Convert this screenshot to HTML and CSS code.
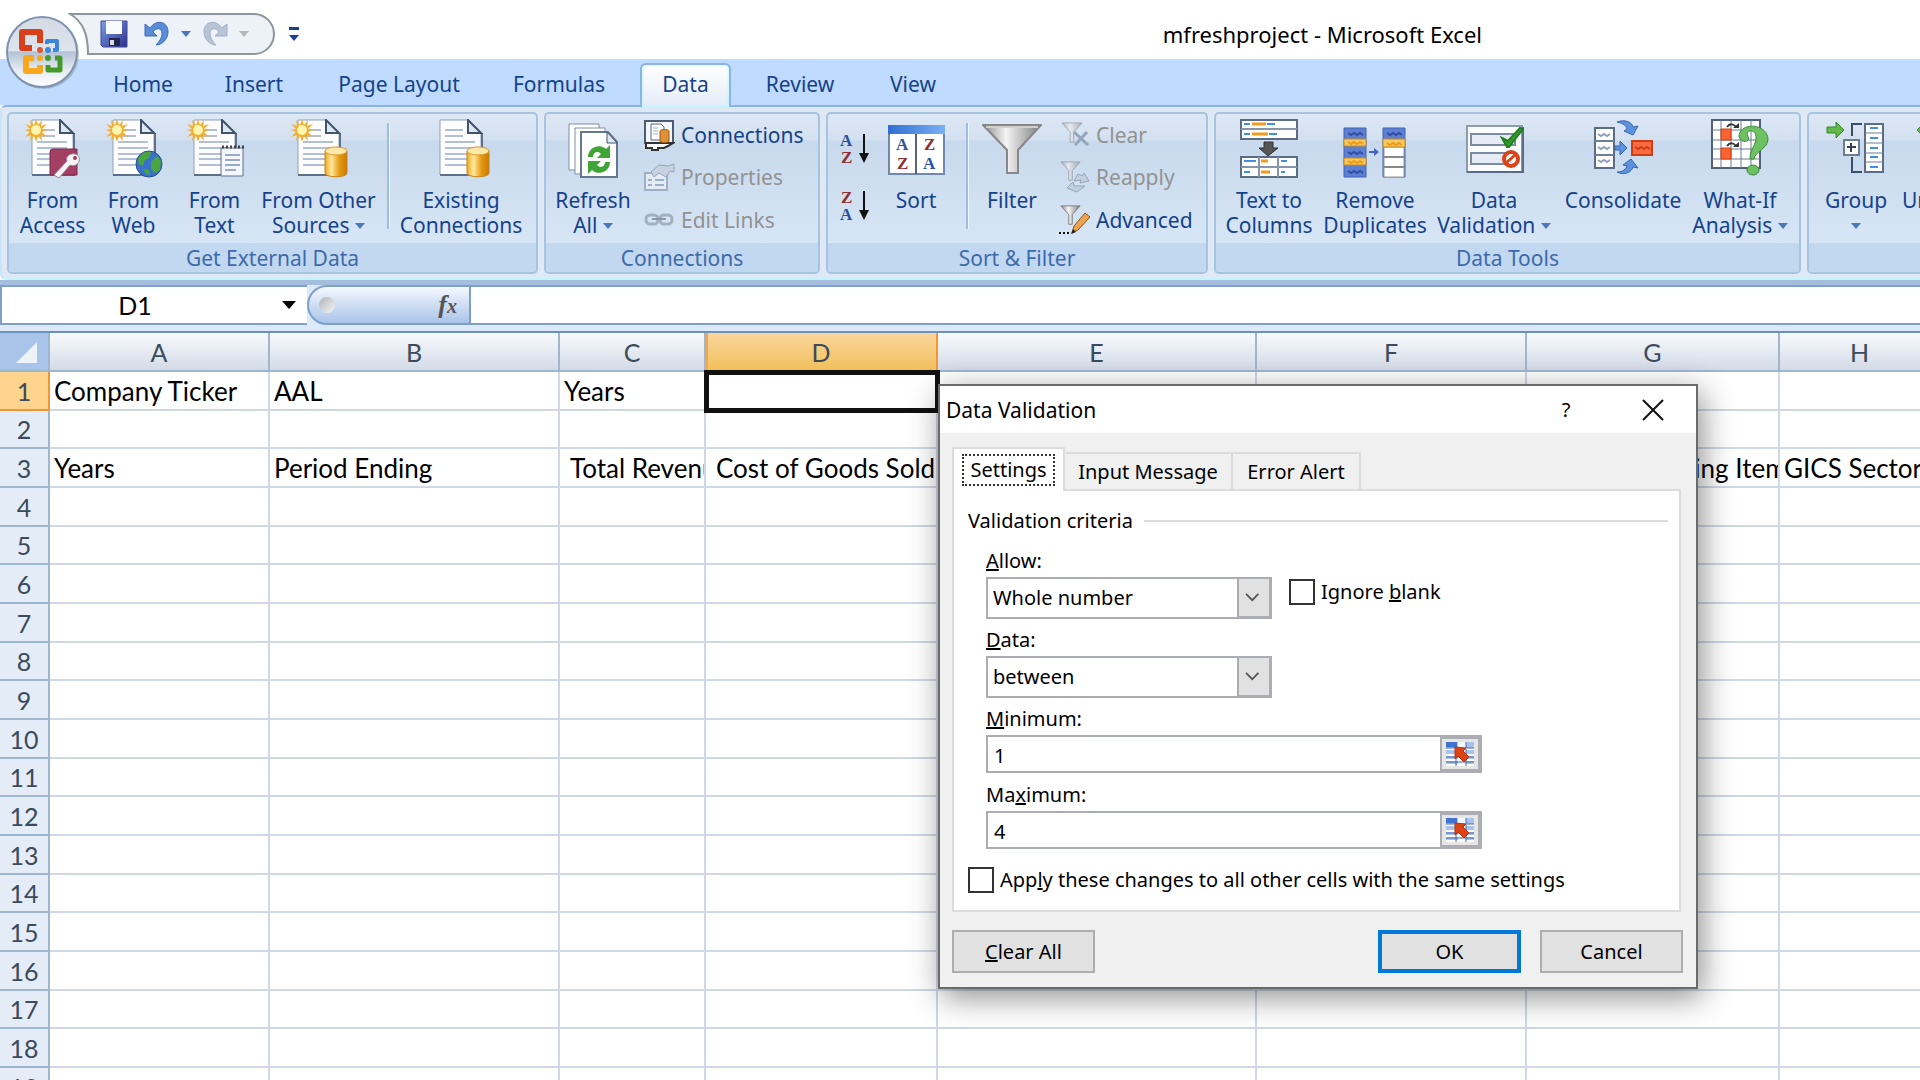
FILE: index.html
```html
<!DOCTYPE html>
<html lang="en">
<head>
<meta charset="utf-8">
<title>mfreshproject - Microsoft Excel</title>
<link rel="stylesheet" href="styles.css">
</head>
<body>
<svg class="defs" aria-hidden="true">
  <defs>
    <linearGradient id="gold" x1="0" x2="1"><stop offset="0" stop-color="#f0a81e"/><stop offset=".3" stop-color="#ffe9a0"/><stop offset=".65" stop-color="#e59a12"/><stop offset="1" stop-color="#c87a05"/></linearGradient>
    <linearGradient id="steel" x1="0" x2="1"><stop offset="0" stop-color="#8d8d8d"/><stop offset=".4" stop-color="#f4f4f4"/><stop offset="1" stop-color="#7c7c7c"/></linearGradient>
    <linearGradient id="floppy" x1="0" x2="1" y2="1"><stop offset="0" stop-color="#7f9ee8"/><stop offset="1" stop-color="#2b3189"/></linearGradient>
    <linearGradient id="orb" x2="0" y2="1"><stop offset="0" stop-color="#d3dae4"/><stop offset=".48" stop-color="#dde4ec"/><stop offset=".5" stop-color="#b3c2d4"/><stop offset=".75" stop-color="#e4eaf1"/><stop offset="1" stop-color="#fff"/></linearGradient>
    <linearGradient id="bluebar" x2="1"><stop offset="0" stop-color="#2f6fd0"/><stop offset="1" stop-color="#79b0f5"/></linearGradient>
    <symbol id="page" viewBox="0 0 60 60">
      <path d="M9 1h29l12 13v42H9z" fill="#fdfdff" stroke="#8fa1b8"/>
      <path d="M9 56h42V14" fill="none" stroke="#5d7089" stroke-width="2"/>
      <path d="M37 1v13h13z" fill="#dfe7f2" stroke="#41546e" stroke-width="2"/>
      <path d="M14 11h18M14 17h18M14 23h30M14 29h30M14 35h30M14 40h30M14 46h30" stroke="#b3bfd2" stroke-width="2"/>
    </symbol>
    <symbol id="spark" viewBox="0 0 22 22">
      <path d="M11 0l2 6 4-5-1 6 6-2-5 5 5 1-5 2 5 5-6-2 1 6-4-5-2 6-2-6-4 5 1-6-6 2 5-5-5-2 5-1-5-5 6 2-1-6 4 5z" fill="#f4ad2c"/>
      <circle cx="11" cy="11" r="5" fill="#fff6b0"/>
    </symbol>
    <symbol id="cylinder" viewBox="0 0 24 32">
      <path d="M1 5v22c0 5 22 5 22 0V5z" fill="url(#gold)" stroke="#c98414"/>
      <ellipse cx="12" cy="5" rx="11" ry="4" fill="#ffe9a8" stroke="#d89a2a"/>
    </symbol>
    <symbol id="funnel" viewBox="0 0 24 24">
      <path d="M1 1h22l-9 10v11h-4V11z" fill="url(#steel)" stroke="#777"/>
    </symbol>
    <symbol id="rangepick" viewBox="0 0 30 26">
      <path d="M1 1h28v24H1z" fill="#a9c2ee"/>
      <path d="M13 1h8v24h-8z" fill="#f3f7ff"/>
      <path d="M1 1h11v5H1z" fill="#3f73d2"/>
      <path d="M1 8h28M1 14h28M1 19h28M1 24h28" stroke="#fff" stroke-width="2"/>
      <path d="M1 7h9M1 16h28M1 21h28M22 7h7M11 6v19M21 1v24" stroke="#466ba6"/>
      <path d="M10 6l11 1-3 3 6 6-5 5-6-6-3 3z" fill="#dd4415" stroke="#b5340c"/>
    </symbol>
  </defs>
</svg>

<header class="titlebar">
  <button class="office" aria-label="Office Button">
    <svg viewBox="0 0 76 76" width="76" height="76">
      <circle cx="39" cy="39" r="35" fill="#8a93a0" opacity=".5"/>
      <circle cx="37" cy="37" r="35" fill="url(#orb)" stroke="#7d92b0" stroke-width="2"/>
      <g fill="none" stroke-linejoin="round">
        <path d="M27 33H17V17h18v11" stroke="#d8401b" stroke-width="6"/>
        <path d="M42 29v-3h10v9h-4" stroke="#3b86dc" stroke-width="4"/>
        <path d="M29 43h-8v13h14v-6" stroke="#f7a81c" stroke-width="6"/>
        <path d="M43 50v5h12V43h-5" stroke="#45992c" stroke-width="5"/>
      </g>
      <circle cx="35" cy="35" r="3" fill="#e5532d"/><circle cx="43" cy="35" r="3" fill="#3b86dc"/><circle cx="35" cy="43" r="3" fill="#f7a81c"/><circle cx="43" cy="43" r="3" fill="#45992c"/>
    </svg>
  </button>
  <nav class="qat" aria-label="Quick Access Toolbar">
    <svg class="qat-shape" viewBox="0 0 208 44" width="208" height="44" aria-hidden="true">
      <path d="M2 2H186a20 20 0 0 1 0 40H20C20 24 16 10 2 2z" fill="#edf1f8" stroke="#8f959d" stroke-width="2"/>
    </svg>
    <button aria-label="Save"><svg viewBox="0 0 28 28" width="28" height="28"><path d="M1 1h26v26H3l-2-2z" fill="url(#floppy)" stroke="#3c4a9e"/><path d="M6 1h16v13H6z" fill="#f8fbff"/><path d="M9 18h11v8H9z" fill="#23264e"/><path d="M10 20h4v5h-4z" fill="#ddd"/></svg></button>
    <button aria-label="Undo"><svg viewBox="0 0 26 26" width="26" height="26"><path d="M1 3v12h12l-4-4c3-5 9-4 9 1s-3 9-6 12c6 0 12-6 12-13C24 0 12-2 6 7z" fill="#5b8cd8" stroke="#3c6cbb"/></svg></button>
    <button class="drop" aria-label="Undo list"><i class="tri"></i></button>
    <button aria-label="Redo"><svg viewBox="0 0 26 26" width="26" height="26"><path d="M25 3v12H13l4-4c-3-5-9-4-9 1s3 9 6 12C8 24 2 18 2 11 2 0 14-2 20 7z" fill="#b9c5d6" stroke="#9fafc4"/></svg></button>
    <button class="drop" aria-label="Redo list"><i class="tri pale"></i></button>
    <button class="more" aria-label="Customize"><i class="tri dark"></i></button>
  </nav>
  <h1>mfreshproject - Microsoft Excel</h1>
</header>

<nav class="tabs">
  <a href="#" class="t-home">Home</a><a href="#" class="t-insert">Insert</a><a href="#" class="t-layout">Page Layout</a><a href="#" class="t-formulas">Formulas</a><a href="#" class="t-data active">Data</a><a href="#" class="t-review">Review</a><a href="#" class="t-view">View</a>
</nav>

<div class="ribbon">
  <section class="group g-external">
    <div class="tools">
      <button class="big w81"><svg viewBox="0 0 60 60"><use href="#page" width="60" height="60"/><use href="#spark" x="2" width="22" height="22"/><path d="M27 33q0-3 3-3h24v26H27z" fill="#a33f63" stroke="#812a4c"/><path d="M31 56l13-14c-2-5 4-8 8-7 5 1 6 7 2 10-2 2-5 2-7 1L36 59z" fill="#f7f4f6" stroke="#998b95"/><circle cx="52" cy="39" r="2" fill="#a33f63"/></svg><span>From<br>Access</span></button>
      <button class="big w81"><svg viewBox="0 0 60 60"><use href="#page" width="60" height="60"/><use href="#spark" x="2" width="22" height="22"/><circle cx="45" cy="45" r="13" fill="#3a72cb" stroke="#274d93"/><path d="M34 40c4-7 9-8 13-7l-2 6-5 3-1 5-4-2zM47 43l6-6 4 5-1 9-5 3-4-4zM39 50l6 1 1 5-5-2z" fill="#49a63c"/></svg><span>From<br>Web</span></button>
      <button class="big w81"><svg viewBox="0 0 60 60"><use href="#page" width="60" height="60"/><use href="#spark" x="2" width="22" height="22"/><path d="M36 29h22v28H36z" fill="#f4f8fe" stroke="#5d7089"/><path d="M37 28h22" stroke="#444" stroke-width="3" stroke-dasharray="2 2"/><path d="M40 36h15M40 41h15M40 46h15M40 51h11" stroke="#9dabc1" stroke-width="2"/></svg><span>From<br>Text</span></button>
      <button class="big w127"><svg viewBox="0 0 60 60"><use href="#page" width="60" height="60"/><use href="#spark" x="2" width="22" height="22"/><use href="#cylinder" x="35" y="27" width="24" height="32"/></svg><span>From Other<br>Sources <i class="tri"></i></span></button>
      <span class="sep"></span>
      <button class="big w136"><svg viewBox="0 0 60 60"><use href="#page" width="60" height="60"/><use href="#cylinder" x="35" y="27" width="24" height="32"/></svg><span>Existing<br>Connections</span></button>
    </div>
    <h2>Get External Data</h2>
  </section>

  <section class="group g-conn">
    <div class="tools">
      <button class="big w88"><svg viewBox="0 0 60 60"><g fill="#fff" stroke="#7f8fa6"><path d="M6 5h30v46H6z"/><path d="M12 9h30v46H12z"/></g><path d="M18 13h27l9 10v35H18z" fill="#fff" stroke="#65778f" stroke-width="2"/><path d="M44 13v11h10z" fill="#dfe7f2" stroke="#41546e"/><g fill="#3fa535"><path d="M25 38c0-10 12-14 18-8l4-4v13H34l4-4c-4-4-8-1-8 3z"/><path d="M47 43c0 10-12 14-18 8l-4 4V42h13l-4 4c4 4 8 1 8-3z"/></g></svg><span>Refresh<br>All <i class="tri"></i></span></button>
      <div class="stack">
        <button class="small"><svg viewBox="0 0 32 32"><path d="M2 2h28v22H2z" fill="#f3f6fb" stroke="#4b5b72" stroke-width="2"/><path d="M3 24v5h6v2h6v-2h6l4-2 5-3z" fill="#fff" stroke="#333" stroke-width="2"/><path d="M4 4h24v18H4z" fill="#f3f6fb"/><path d="M8 5h10l3 3v13H8z" fill="#fff" stroke="#56698a"/><path d="M10 9h5M10 12h5M10 15h5" stroke="#9aabc4"/><path d="M17 12v10c0 2 9 2 9 0V12c0-2-9-2-9 0z" fill="#e09034" stroke="#a55d17"/></svg>Connections</button>
        <button class="small" disabled><svg viewBox="0 0 32 32"><path d="M2 12h22v17H2z" fill="#e4ebf4" stroke="#9fb0c6" stroke-width="2"/><path d="M5 19h4M5 24h4M12 19h9M12 24h9" stroke="#9fb0c6" stroke-width="2"/><path d="M8 11l8-7 9 1 6-2v8l-4-1-4 6-7-4-5 4z" fill="#c6d2e1" stroke="#94a5bc"/></svg>Properties</button>
        <button class="small" disabled><svg viewBox="0 0 32 32"><g fill="none" stroke="#a3b0c0" stroke-width="3"><rect x="3" y="11" width="12" height="9" rx="4"/><rect x="17" y="11" width="12" height="9" rx="4"/><path d="M9 15h14" stroke="#8c99aa" stroke-width="2"/></g></svg>Edit Links</button>
      </div>
    </div>
    <h2>Connections</h2>
  </section>

  <section class="group g-sort">
    <div class="tools">
      <div class="az">
        <button aria-label="Sort A to Z"><svg viewBox="0 0 32 32" width="32" height="32"><text x="1" y="13" class="ic a">A</text><text x="2" y="30" class="ic z">Z</text><path d="M25 1v22" stroke="#111" stroke-width="2"/><path d="M20 20h10l-5 10z" fill="#111"/></svg></button>
        <button aria-label="Sort Z to A"><svg viewBox="0 0 32 32" width="32" height="32"><text x="2" y="13" class="ic z">Z</text><text x="1" y="30" class="ic a">A</text><path d="M25 1v22" stroke="#111" stroke-width="2"/><path d="M20 20h10l-5 10z" fill="#111"/></svg></button>
      </div>
      <button class="big w90"><svg viewBox="0 0 60 60"><path d="M3 7h55v48H3z" fill="#fff" stroke="#6f88ab" stroke-width="2"/><path d="M2 6h57v9H2z" fill="url(#bluebar)"/><path d="M30 15v40" stroke="#54657c" stroke-width="2"/><text x="10" y="31" class="ic a">A</text><text x="11" y="50" class="ic z">Z</text><text x="38" y="31" class="ic z">Z</text><text x="37" y="50" class="ic a">A</text></svg><span>Sort</span></button>
      <span class="sep"></span>
      <button class="big w80"><svg viewBox="0 0 60 60"><path d="M1 6h58L36 31v23H25V31z" fill="url(#steel)" stroke="#888" stroke-width="2"/><path d="M4 8h52" stroke="#cfcfcf" stroke-width="2"/></svg><span>Filter</span></button>
      <div class="stack">
        <button class="small" disabled><svg viewBox="0 0 32 32"><use href="#funnel" x="3" y="3" width="22" height="22" opacity=".55"/><path d="M16 13l14 13M29 13L17 26" stroke="#94a5bc" stroke-width="3"/></svg>Clear</button>
        <button class="small" disabled><svg viewBox="0 0 32 32"><use href="#funnel" x="2" width="21" height="21" opacity=".55"/><path d="M16 20l4-7 4 2 2-3 5 8-9 2 1-3zM27 25l-8 6-10-4 6-6 1 4z" fill="#c3cfde" stroke="#94a5bc"/></svg>Reapply</button>
        <button class="small"><svg viewBox="0 0 32 32"><use href="#funnel" x="2" y="1" width="21" height="21"/><path d="M1 29h11" stroke="#111" stroke-width="2" stroke-dasharray="2 2"/><path d="M14 29l2-7L27 9l5 4-12 13z" fill="#f0a24d" stroke="#8a5522"/><path d="M13 30l2-5 3 3z" fill="#222"/></svg>Advanced</button>
      </div>
    </div>
    <h2>Sort &amp; Filter</h2>
  </section>

  <section class="group g-tools">
    <div class="tools">
      <button class="big w100"><svg viewBox="0 0 60 60"><path d="M2 1h56v19H2zM2 38h56v20H2z" fill="#fff" stroke="#5b6d84" stroke-width="2"/><path d="M2 10h56M2 48h56M20 38v20M39 38v20" stroke="#8695ab" stroke-width="2"/><path d="M5 5h6M28 5h8M5 15h6M30 15h8M5 42h12M42 42h6M5 53h6M42 53h4" stroke="#3f8fe6" stroke-width="2"/><path d="M13 5h14M13 15h16M22 42h7M22 53h9" stroke="#f39b1d" stroke-width="3"/><path d="M25 23h9v6h5L29 37l-9-8h5z" fill="#555" stroke="#333"/></svg><span>Text to<br>Columns</span></button>
      <button class="big w112"><svg viewBox="0 0 64 60" class="wide"><path d="M1 9h22v49H1zM40 9h22v49H40z" fill="#5d7fd0" stroke="#4263b8"/><path d="M41 28h20v30H41z" fill="#fff" stroke="#999"/><path d="M41 38h20M41 48h20" stroke="#888" stroke-width="2"/><path d="M1 20h22v7H1zM1 39h22v7H1zM40 20h22v8H40z" fill="#f8c860" stroke="#c78a1d"/><path d="M5 14l3 2 3-2 3 2 3-2 3 2M5 33l3 2 3-2 3 2 3-2 3 2M5 52l3 2 3-2 3 2 3-2 3 2M44 14l3 2 3-2 3 2 3-2 3 2" fill="none" stroke="#2f4fa5" stroke-width="2"/><path d="M5 23l3 2 3-2 3 2 3-2 3 2M5 42l3 2 3-2 3 2 3-2 3 2M44 24l3 2 3-2 3 2 3-2 3 2" fill="none" stroke="#ef9a12" stroke-width="2"/><path d="M26 33h8" stroke="#4263c0" stroke-width="2"/><path d="M31 29l5 4-5 4z" fill="#4263c0"/></svg><span>Remove<br>Duplicates</span></button>
      <button class="big w126"><svg viewBox="0 0 60 60"><path d="M3 7h55v46H3z" fill="#fbfcff" stroke="#8b9bb1" stroke-width="2"/><path d="M3 53h56V8" fill="none" stroke="#5b6d84" stroke-width="2"/><path d="M7 15h44v11H7zM7 34h44v11H7z" fill="#e6ecf5" stroke="#7b8ba2" stroke-width="2"/><path d="M38 19l6 3L56 9l3 1-14 18h-2z" fill="#2f9e2b" stroke="#23801f" stroke-width="2"/><circle cx="47" cy="40" r="7" fill="#fff" stroke="#db4416" stroke-width="4"/><path d="M42 44l9-8" stroke="#db4416" stroke-width="3"/></svg><span>Data<br>Validation <i class="tri"></i></span></button>
      <button class="big w132"><svg viewBox="0 0 60 60"><path d="M2 9h19v40H2z" fill="#fff" stroke="#5b6d84" stroke-width="2"/><path d="M2 22h19M2 36h19" stroke="#6c7d94" stroke-width="2"/><path d="M5 15l3 2 3-2 3 2 3-2M5 28l3 2 3-2 3 2 3-2M5 41l3 2 3-2 3 2 3-2" fill="none" stroke="#8fa0b8" stroke-width="2"/><g fill="#5f92dc" stroke="#3566b4"><path d="M24 3c8-3 15 0 16 5l5-1-5 9-9-4 3-2c-1-4-5-6-10-7z"/><path d="M22 27h5v-5l7 7-7 7v-5h-5z"/><path d="M24 53c6 0 9-3 10-6l-4-1 8-6 7 9-5-1c-1 5-9 9-16 5z"/></g><path d="M39 22h20v14H39z" fill="#fa6a40" stroke="#cc3e12" stroke-width="2"/><path d="M42 28l3 2 3-2 3 2 3-2 3 2" fill="none" stroke="#cc3e12" stroke-width="2"/></svg><span>Consolidate</span></button>
      <button class="big w102"><svg viewBox="0 0 60 60"><path d="M2 1h48v48H2z" fill="#fff" stroke="#4f6078" stroke-width="2"/><path d="M11 1v48M21 1v48M31 1v48M41 1v48M2 11h48M2 21h48M2 30h48M2 40h48" stroke="#6d7d94"/><path d="M11 10h10v11H11zM11 29h10v11H11z" fill="#fb6330" stroke="#cc3e12"/><path d="M17 8c3-4 7-3 9 0M17 27c3-4 7-3 9 0" fill="none" stroke="#333" stroke-width="2"/><path d="M23 9h6V4zM23 28h6v-5z" fill="#333"/><path d="M29 17C30 3 57 4 58 20c0 10-13 12-14 20h-4c0-11 7-14 6-23-1-6-8-7-9-2l2 5c-2 4-9 3-10-3z" fill="#6dc163" stroke="#3a8b35" stroke-width="1"/><ellipse cx="43" cy="51" rx="6" ry="5" fill="#6dc163" stroke="#3a8b35"/></svg><span>What-If<br>Analysis <i class="tri"></i></span></button>
    </div>
    <h2>Data Tools</h2>
  </section>

  <section class="group g-outline">
    <div class="tools">
      <button class="big w88"><svg viewBox="0 0 60 60"><path d="M1 8h9V3l8 8-8 8v-5H1z" fill="#62b94b" stroke="#34872a"/><path d="M36 5H26v12M26 38v15h10" fill="none" stroke="#3c4d66" stroke-width="2"/><path d="M18 21h15v15H18z" fill="#fff" stroke="#6d7d94" stroke-width="2"/><path d="M21 28h9M25 24v9" stroke="#33425a" stroke-width="2"/><path d="M39 5h18v48H39z" fill="#fff" stroke="#5b6d84" stroke-width="2"/><path d="M39 14h18M39 24h18M39 34h18M39 43h18" stroke="#6d7d94"/><path d="M44 9h8M44 19h8M44 29h8M44 38h8M44 48h8" stroke="#3f8fe6" stroke-width="2"/></svg><span>Group<br><i class="tri"></i></span></button>
      <button class="big w92"><svg viewBox="0 0 60 60"><path d="M18 8H9V3l-8 8 8 8v-5h9z" fill="#62b94b" stroke="#34872a"/></svg><span>Ungroup<br><i class="tri"></i></span></button>
    </div>
    <h2></h2>
  </section>
</div>

<div class="formulabar">
  <div class="namebox"><input class="name" value="D1" aria-label="Name Box"><i class="tri black"></i></div>
  <div class="fxpill"><i class="dot"></i><button aria-label="Insert Function"><span class="f">f</span><span class="x">x</span></button></div>
  <input class="formula" aria-label="Formula Bar">
</div>

<main class="sheet">
  <table class="grid">
    <colgroup><col class="c0"><col class="cA"><col class="cB"><col class="cC"><col class="cD"><col class="cE"><col class="cF"><col class="cG"><col class="cH"></colgroup>
    <thead><tr><th class="corner"><svg viewBox="0 0 40 30" width="40" height="30" aria-hidden="true"><path d="M33 4v21H12z" fill="#eef3f8"/></svg></th><th>A</th><th>B</th><th>C</th><th class="sel">D</th><th>E</th><th>F</th><th>G</th><th>H</th></tr></thead>
    <tbody>
      <tr><th class="sel">1</th><td>Company Ticker</td><td>AAL</td><td>Years</td><td class="cursor"></td><td></td><td></td><td></td><td></td></tr>
      <tr><th>2</th><td></td><td></td><td></td><td></td><td></td><td></td><td></td><td></td></tr>
      <tr><th>3</th><td>Years</td><td>Period Ending</td><td class="ind">Total Revenue</td><td class="ind">Cost of Goods Sold</td><td></td><td></td><td class="ind2">Non-Recurring Items</td><td>GICS Sector</td></tr>
      <tr><th>4</th><td></td><td></td><td></td><td></td><td></td><td></td><td></td><td></td></tr>
      <tr><th>5</th><td></td><td></td><td></td><td></td><td></td><td></td><td></td><td></td></tr>
      <tr><th>6</th><td></td><td></td><td></td><td></td><td></td><td></td><td></td><td></td></tr>
      <tr><th>7</th><td></td><td></td><td></td><td></td><td></td><td></td><td></td><td></td></tr>
      <tr><th>8</th><td></td><td></td><td></td><td></td><td></td><td></td><td></td><td></td></tr>
      <tr><th>9</th><td></td><td></td><td></td><td></td><td></td><td></td><td></td><td></td></tr>
      <tr><th>10</th><td></td><td></td><td></td><td></td><td></td><td></td><td></td><td></td></tr>
      <tr><th>11</th><td></td><td></td><td></td><td></td><td></td><td></td><td></td><td></td></tr>
      <tr><th>12</th><td></td><td></td><td></td><td></td><td></td><td></td><td></td><td></td></tr>
      <tr><th>13</th><td></td><td></td><td></td><td></td><td></td><td></td><td></td><td></td></tr>
      <tr><th>14</th><td></td><td></td><td></td><td></td><td></td><td></td><td></td><td></td></tr>
      <tr><th>15</th><td></td><td></td><td></td><td></td><td></td><td></td><td></td><td></td></tr>
      <tr><th>16</th><td></td><td></td><td></td><td></td><td></td><td></td><td></td><td></td></tr>
      <tr><th>17</th><td></td><td></td><td></td><td></td><td></td><td></td><td></td><td></td></tr>
      <tr><th>18</th><td></td><td></td><td></td><td></td><td></td><td></td><td></td><td></td></tr>
      <tr><th>19</th><td></td><td></td><td></td><td></td><td></td><td></td><td></td><td></td></tr>
    </tbody>
  </table>
</main>

<form class="dialog" role="dialog" aria-labelledby="dlg-title">
  <div class="dlg-head">
    <h2 id="dlg-title">Data Validation</h2>
    <button type="button" class="help" aria-label="Help">?</button>
    <button type="button" class="close" aria-label="Close"><svg viewBox="0 0 22 22" width="22" height="22"><path d="M1 1l20 20M21 1L1 21" stroke="#111" stroke-width="2"/></svg></button>
  </div>
  <div class="dlg-tabs">
    <button type="button" class="on"><span>Settings</span></button><button type="button" class="t2">Input Message</button><button type="button" class="t3">Error Alert</button>
  </div>
  <div class="pane">
    <div class="legend">Validation criteria<span class="rule"></span></div>
    <div class="fields">
      <label for="allow"><u>A</u>llow:</label>
      <div class="line">
        <div class="combo"><select id="allow"><option>Whole number</option></select><svg viewBox="0 0 34 38" width="34" height="38" aria-hidden="true"><path d="M8 15l7 7 7-7" fill="none" stroke="#555" stroke-width="2"/></svg></div>
        <label class="check"><input type="checkbox">Ignore <u>b</u>lank</label>
      </div>
      <label for="data"><u>D</u>ata:</label>
      <div class="line">
        <div class="combo"><select id="data"><option>between</option></select><svg viewBox="0 0 34 38" width="34" height="38" aria-hidden="true"><path d="M8 15l7 7 7-7" fill="none" stroke="#555" stroke-width="2"/></svg></div>
      </div>
      <label for="min"><u>M</u>inimum:</label>
      <div class="ref"><input id="min" value="1"><button type="button" aria-label="Select minimum range"><svg width="30" height="26"><use href="#rangepick" width="30" height="26"/></svg></button></div>
      <label for="max">Ma<u>x</u>imum:</label>
      <div class="ref"><input id="max" value="4"><button type="button" aria-label="Select maximum range"><svg width="30" height="26"><use href="#rangepick" width="30" height="26"/></svg></button></div>
    </div>
    <label class="check all"><input type="checkbox">App<u>l</u>y these changes to all other cells with the same settings</label>
  </div>
  <div class="actions">
    <button type="button" class="clear"><u>C</u>lear All</button>
    <button type="button" class="ok">OK</button>
    <button type="button">Cancel</button>
  </div>
</form>
</body>
</html>
```
FILE: styles.css
```css
* { box-sizing: border-box; }
html, body { height: 100%; }
body {
  margin: 0;
  position: relative;
  display: flex;
  flex-direction: column;
  overflow: hidden;
  background: #fff;
  font-family: "Noto Sans", sans-serif;
  font-size: 21px;
  color: #000;
}
button, input, select { font: inherit; color: inherit; margin: 0; padding: 0; border: 0; background: none; border-radius: 0; }
h1, h2 { margin: 0; font-weight: 400; }
.defs { position: absolute; width: 0; height: 0; }

.tri { display: inline-block; width: 0; height: 0; border: 5px solid transparent; border-top: 6px solid #4a77b8; border-bottom: 0; vertical-align: middle; }
.tri.pale { border-top-color: #b5b5b5; }
.tri.dark { border-top-color: #1c3f94; }
.tri.black { border-width: 8px 7px 0; border-top-color: #000; }

/* title bar */
.titlebar { position: relative; flex: none; display: flex; align-items: center; height: 59px; padding-top: 8px; }
.office { position: absolute; left: 5px; top: 15px; height: 76px; z-index: 2; }
.qat { position: relative; display: flex; align-items: center; gap: 8px; height: 44px; margin-left: 68px; padding-left: 32px; }
.qat-shape { position: absolute; left: 0; top: 0; }
.qat button { position: relative; display: flex; align-items: center; }
.qat button:nth-of-type(2) { margin-left: 8px; }
.qat .drop { margin: 0 3px; }
.qat .more { margin-left: 29px; padding-top: 5px; border-top: 3px solid #1c3f94; }
.titlebar h1 { margin-left: auto; margin-right: 438px; font-size: 22px; line-height: 30px; }

/* tabs */
.tabs { flex: none; display: flex; height: 46px; padding: 4px 0 0 84px; background: #bfdbff; }
.tabs a { display: flex; align-items: center; justify-content: center; height: 42px; color: #15428b; text-decoration: none; }
.t-home { width: 118px; }
.t-insert { width: 104px; }
.t-layout { width: 186px; }
.t-formulas { width: 134px; margin-right: 14px; }
.t-data { width: 91px; }
.t-review { width: 138px; }
.t-view { width: 88px; }
.tabs .active { position: relative; z-index: 1; height: 44px; padding-bottom: 4px; border: 2px solid #8db2e3; border-bottom: 0; border-radius: 6px 6px 0 0; background: linear-gradient(#fff, #e3ecf8); box-shadow: inset 0 0 3px #9ff; }

/* ribbon */
.ribbon {
  flex: none; display: flex; gap: 6px; height: 175px; padding: 5px 0 4px 5px; overflow: hidden;
  border-top: 2px solid #8db2e3; border-bottom: 2px solid #c3f3fb; border-left: 2px solid #c9e4f8; border-radius: 6px 0 0 6px; background: #dfe9f5;
}
.group { flex: none; display: flex; flex-direction: column; border: 2px solid #a6c3e0; border-radius: 5px; overflow: hidden; background: linear-gradient(#dde8f5 0, #d3e0f0 26px, #c8d9ed 27px, #d7e6f5 130px); }
.g-external { width: 531px; }
.g-conn { width: 276px; }
.g-sort { width: 382px; }
.g-tools { width: 587px; }
.g-outline { width: 200px; }
.group h2 { flex: none; height: 29px; background: #c1d8f0; color: #3e6aaa; text-align: center; font-size: 21px; line-height: 30px; }
.tools { flex: 1; display: flex; align-items: flex-start; padding-left: 3px; }
.big { flex: none; display: flex; flex-direction: column; align-items: center; justify-content: flex-start; gap: 9px; padding-top: 5px; color: #15428b; line-height: 25px; text-align: center; white-space: nowrap; }
.big svg { flex: none; width: 60px; height: 60px; }
.big svg.wide { width: 64px; }
.big .tri { margin-bottom: 2px; }
.w80 { width: 80px; } .w81 { width: 81px; } .w88 { width: 88px; } .w90 { width: 90px; } .w92 { width: 92px; }
.w100 { width: 100px; } .w102 { width: 102px; } .w112 { width: 112px; } .w126 { width: 126px; } .w127 { width: 127px; } .w132 { width: 132px; } .w136 { width: 136px; }
.sep { flex: none; width: 3px; height: 106px; margin: 9px 3px 0 5px; border-left: 2px solid #9dbde0; background: #eef5fc; }
.stack { display: flex; flex-direction: column; height: 127px; padding-left: 6px; }
.small { display: flex; flex: 1; align-items: center; gap: 6px; color: #15428b; }
.small svg { width: 32px; height: 32px; }
.small:disabled { color: #929292; }
.az { display: flex; flex-direction: column; gap: 25px; padding: 19px 0 0 8px; }
.az button { height: 32px; }
.az svg { display: block; overflow: visible; }
.ic { font: bold 17px "Liberation Serif", serif; }
.a { fill: #2a50a0; }
.z { fill: #8e3030; }

/* formula bar */
.formulabar { flex: none; display: flex; height: 53px; padding-bottom: 8px; border-top: 5px solid #a5bedd; background: #dce9f8; box-shadow: inset 0 -2px #6b92be; }
.namebox { display: flex; align-items: center; width: 307px; border: 2px solid #7d9fc8; border-right: 0; background: #fff; }
.name { flex: 1; min-width: 0; padding-left: 6px; text-align: center; font: 25px Lato, sans-serif; }
.namebox .tri { margin: 0 11px 0 20px; }
.fxpill { display: flex; align-items: center; justify-content: space-between; width: 164px; padding: 0 12px 0 10px; border: 2px solid #7d9fc8; border-radius: 20px 0 0 20px; background: linear-gradient(#f4f8fd, #a9c4e9); }
.dot { width: 16px; height: 16px; border-radius: 8px; background: linear-gradient(135deg, #aeb3ba, #f5f5f5); }
.fxpill button { color: #555; font: italic bold 26px/28px "Liberation Serif", serif; }
.fxpill .x { font-size: 20px; }
.formula { flex: 1; border: solid #7d9fc8; border-width: 2px 0; background: #fff; }

/* sheet */
.sheet { flex: 1; min-height: 0; overflow: hidden; }
.grid { table-layout: fixed; width: 1941px; border-collapse: separate; border-spacing: 0; font: 25px Lato, sans-serif; }
.c0 { width: 50px; } .cA { width: 220px; } .cB { width: 290px; } .cC { width: 146px; } .cD { width: 232px; }
.cE { width: 319px; } .cF { width: 270px; } .cG { width: 253px; } .cH { width: 161px; }
.grid tr { height: 39px; }
.grid tbody tr:nth-child(3n + 2) { height: 38px; }
.grid th, .grid td { padding: 0; height: inherit; line-height: 34px; overflow: hidden; white-space: nowrap; }
.grid th { color: #3c4a5c; font-weight: 400; text-align: center; border-right: 2px solid #9eb6ce; border-bottom: 2px solid #9eb6ce; }
.grid thead th { background: linear-gradient(#f8fafc, #d3dbe8); }
.grid tbody th { background: #e4ecf7; }
.grid td { padding-left: 4px; border-right: 2px solid #d0d7e5; border-bottom: 2px solid #d0d7e5; font-size: 26px; }
.grid td.ind { padding-left: 10px; }
.grid td.ind2 { padding-left: 34px; }
.grid thead .corner { background: #a9c4e9; }
.corner svg { display: block; margin: 2px auto 0; }
.grid thead .sel { background: linear-gradient(#fad69c, #f1c05c); border-right-color: #f29536; border-bottom-color: #d8892a; box-shadow: inset 2px 0 #f2a54a; }
.grid tbody .sel { background: #ffd58d; border-color: #f29536; }
.grid .cursor { border: 0; outline: 5px solid #111; outline-offset: -3px; }

/* dialog */
.dialog {
  position: absolute; left: 938px; top: 384px; width: 760px; z-index: 5;
  border: 2px solid #6a6a6a; background: #f0f0f0; box-shadow: 4px 8px 30px rgba(0, 0, 0, .45);
  font: 20px/24px "Noto Sans", sans-serif;
}
.dlg-head { display: flex; align-items: center; height: 47px; padding: 0 32px 0 6px; background: #fff; }
.dlg-head h2 { flex: 1; font-size: 21px; }
.help { width: 20px; margin-right: 66px; }
.close { display: flex; }
.dlg-tabs { display: flex; align-items: flex-end; height: 56px; padding-left: 12px; }
.dlg-tabs button { height: 37px; border: 2px solid #dcdcdc; border-left: 0; border-bottom: 0; text-align: center; }
.dlg-tabs .on { position: relative; z-index: 1; width: 113px; height: 44px; margin-bottom: -2px; border-left: 2px solid #dcdcdc; background: #fff; }
.dlg-tabs .on span { display: inline-block; padding: 2px 6px; border: 2px dotted #333; }
.dlg-tabs .t2 { width: 168px; }
.dlg-tabs .t3 { width: 128px; }
.pane { margin: 0 15px 0 12px; padding: 17px 11px 15px 14px; background: #fff; border: 2px solid #dcdcdc; }
.legend { display: flex; align-items: center; gap: 11px; height: 26px; }
.rule { flex: 1; height: 2px; background: #dcdcdc; }
.fields { display: flex; flex-direction: column; padding: 15px 0 0 18px; }
.fields > label { height: 28px; }
.line { display: flex; gap: 17px; height: 42px; margin-bottom: 9px; }
.combo { position: relative; width: 286px; height: 42px; }
.combo select { appearance: none; width: 100%; height: 100%; padding-left: 5px; border: 2px solid #abadb3; background: #fff; }
.combo svg { position: absolute; right: 0; top: 0; width: 35px; height: 42px; background: #e1e1e1; border: 2px solid #abadb3; border-right-width: 3px; border-bottom-width: 3px; pointer-events: none; }
.check { display: flex; align-items: center; height: 30px; white-space: pre; }
.check input { appearance: none; flex: none; width: 26px; height: 26px; margin-right: 6px; border: 2px solid #333; background: #fff; }
.ref { display: flex; width: 496px; height: 38px; margin-bottom: 10px; border: 2px solid #abadb3; }
.ref input { flex: 1; min-width: 0; padding: 3px 0 0 6px; }
.ref button { display: flex; align-items: center; justify-content: center; width: 40px; border: 2px solid #abadb3; background: #e6e6e6; }
.all { margin-top: 6px; }
.actions { display: flex; gap: 19px; padding: 18px 13px 14px 12px; }
.actions button { width: 143px; height: 43px; border: 2px solid #adadad; background: #e1e1e1; }
.actions .clear { margin-right: auto; }
.actions .ok { border: 4px solid #0078d7; }
```
